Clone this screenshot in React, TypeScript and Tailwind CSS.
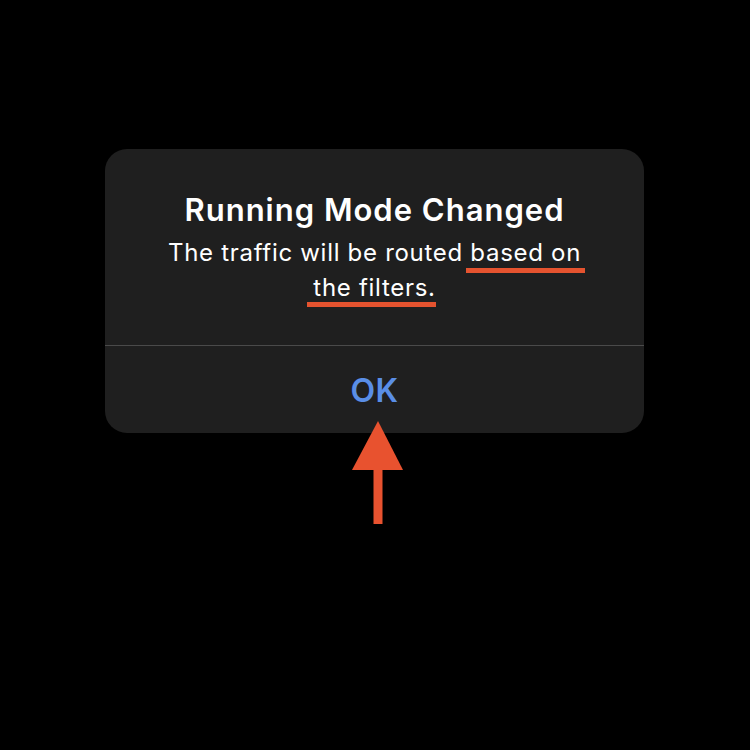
import React from "react";

export default function App() {
  return (
    <div
      className="relative w-[750px] h-[750px] bg-black overflow-hidden"
      style={{ fontFamily: "Inter, 'Noto Sans', sans-serif" }}
    >
      <div className="pt-[149px]">
        <div className="ml-[105px] w-[539px] rounded-[22px] bg-[#1f1f1f] overflow-hidden">
          <div className="pt-[43px] pb-[40px] px-4 flex flex-col items-center text-white">
            <h1 className="text-[31px] leading-[36px] font-semibold tracking-[1px]">
              Running Mode Changed
            </h1>
            <p className="mt-[7px] text-[24px] leading-[35px] text-center tracking-[0.7px]">
              The traffic will be routed{" "}
              <span className="relative">
                based on
                <span className="absolute left-[-4px] right-[-4px] top-[30px] h-[4.5px] bg-[#e5532f]" />
              </span>
              <br />
              <span className="relative">
                the filters.
                <span className="absolute left-[-6px] right-[0px] top-[29px] h-[5px] bg-[#e5532f]" />
              </span>
            </p>
          </div>
          <div className="h-px bg-[#4a4a4a]" />
          <div className="h-[87px] flex items-center justify-center pt-[2px]">
            <span className="text-[32px] leading-[32px] font-semibold tracking-[0.5px] text-[#5a8ee6]">OK</span>
          </div>
        </div>
      </div>
      <svg
        className="absolute left-[352px] top-[421px]"
        width="52"
        height="104"
        viewBox="0 0 52 104"
      >
        <polygon points="26,0 51,49 0,49" fill="#e8522f" />
        <rect x="21.5" y="48" width="9" height="55" fill="#e8522f" />
      </svg>
    </div>
  );
}
